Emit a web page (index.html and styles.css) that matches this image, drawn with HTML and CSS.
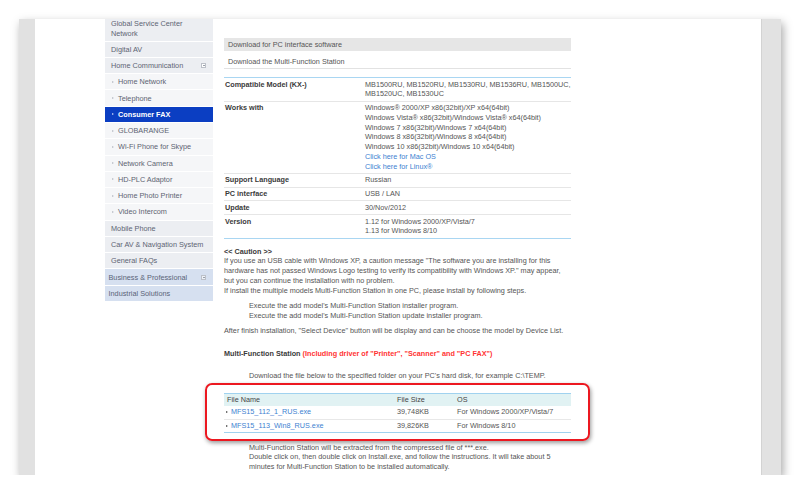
FILE: index.html
```html
<!DOCTYPE html>
<html>
<head>
<meta charset="utf-8">
<link rel="stylesheet" href="styles.css">
</head>
<body>
<div class="stage">
  <div class="frame">
    <div class="strip-l"></div>
    <div class="page">
      <ul class="nav">
        <li class="nav-item first">Global Service Center<br>Network</li>
        <li class="nav-item">Digital AV</li>
        <li class="nav-item">Home Communication <span class="toggle minus"></span></li>
        <li class="nav-item sub">Home Network</li>
        <li class="nav-item sub">Telephone</li>
        <li class="nav-item sub active">Consumer FAX</li>
        <li class="nav-item sub">GLOBARANGE</li>
        <li class="nav-item sub">Wi-Fi Phone for Skype</li>
        <li class="nav-item sub">Network Camera</li>
        <li class="nav-item sub">HD-PLC Adaptor</li>
        <li class="nav-item sub">Home Photo Printer</li>
        <li class="nav-item sub">Video Intercom</li>
        <li class="nav-item">Mobile Phone</li>
        <li class="nav-item">Car AV &amp; Navigation System</li>
        <li class="nav-item">General FAQs</li>
        <li class="nav-item biz">Business &amp; Professional <span class="toggle plus"></span></li>
        <li class="nav-item biz">Industrial Solutions</li>
      </ul>
      <div class="main">
        <div class="bar">Download for PC interface software</div>
        <div class="subtitle">Download the Multi-Function Station</div>
        <table class="spec">
          <tr><th>Compatible Model (KX-)</th><td class="nowrap">MB1500RU, MB1520RU, MB1530RU, MB1536RU, MB1500UC,<br>MB1520UC, MB1530UC</td></tr>
          <tr><th>Works with</th><td>Windows® 2000/XP x86(32bit)/XP x64(64bit)<br>Windows Vista® x86(32bit)/Windows Vista® x64(64bit)<br>Windows 7 x86(32bit)/Windows 7 x64(64bit)<br>Windows 8 x86(32bit)/Windows 8 x64(64bit)<br>Windows 10 x86(32bit)/Windows 10 x64(64bit)<br><a class="link">Click here for Mac OS</a><br><a class="link">Click here for Linux®</a></td></tr>
          <tr><th>Support Language</th><td>Russian</td></tr>
          <tr><th>PC interface</th><td>USB / LAN</td></tr>
          <tr><th>Update</th><td>30/Nov/2012</td></tr>
          <tr class="last"><th>Version</th><td>1.12 for Windows 2000/XP/Vista/7<br>1.13 for Windows 8/10</td></tr>
        </table>
        <div class="caution">
          <p class="bold">&lt;&lt; Caution &gt;&gt;</p>
          <p>If you use an USB cable with Windows XP, a caution message "The software you are installing for this<br>hardware has not passed Windows Logo testing to verify its compatibility with Windows XP." may appear,<br>but you can continue the installation with no problem.<br>If install the multiple models Multi-Function Station in one PC, please install by following steps.</p>
          <p class="indent steps">Execute the add model's Multi-Function Station installer program.<br>Execute the add model's Multi-Function Station update installer program.</p>
          <p class="after">After finish installation, "Select Device" button will be display and can be choose the model by Device List.</p>
          <p class="mfs bold">Multi-Function Station <span class="red">(Including driver of "Printer", "Scanner" and "PC FAX")</span></p>
          <p class="indent dl">Download the file below to the specified folder on your PC's hard disk, for example C:\TEMP.</p>
        </div>
        <div class="files-wrap">
          <table class="files">
            <tr class="head"><td class="c1">File Name</td><td class="c2">File Size</td><td>OS</td></tr>
            <tr><td class="c1"><span class="tri"></span><a class="link">MFS15_112_1_RUS.exe</a></td><td class="c2">39,748KB</td><td>For Windows 2000/XP/Vista/7</td></tr>
            <tr><td class="c1"><span class="tri"></span><a class="link">MFS15_113_Win8_RUS.exe</a></td><td class="c2">39,826KB</td><td>For Windows 8/10</td></tr>
          </table>
        </div>
        <p class="indent tail">Multi-Function Station will be extracted from the compressed file of ***.exe.<br>Double click on, then double click on Install.exe, and follow the instructions. It will take about 5<br>minutes for Multi-Function Station to be installed automatically.</p>
      </div>
    </div>
    <div class="strip-r"></div>
  </div>
</div>
</body>
</html>
```
FILE: styles.css
```css
* { box-sizing: border-box; }
html, body { margin: 0; padding: 0; background: #fff; }
body { font-family: "Liberation Sans", Arial, sans-serif; }
.stage { padding: 19px 19px 0 19px; }
.frame {
  display: flex;
  height: 456px;
  overflow: hidden;
  box-shadow: 2px 4px 9px rgba(0,0,0,0.35);
}
.strip-l { width: 16px; background: #e1e1e1; flex: none; }
.strip-r { width: 20px; background: #e2e2e2; border-left: 1px solid #d3d3d3; flex: none; }
.page {
  flex: 1;
  background: #fff;
  display: flex;
  align-items: flex-start;
  padding-left: 70px;
  gap: 11px;
}

/* sidebar */
.nav {
  list-style: none;
  margin: 0;
  padding: 0;
  width: 108px;
  flex: none;
  font-size: 7.3px;
  color: #5d6472;
}
.nav-item {
  display: flex;
  align-items: center;
  height: 16.27px;
  padding-left: 6px;
  background: #eceef2;
  border-bottom: 1px solid #fff;
  white-space: nowrap;
}
.nav-item.first {
  display: block;
  height: 22.7px;
  line-height: 9.5px;
  padding-top: 0;
}
.nav-item.sub { background: #f5f6f8; padding-left: 7px; }
.nav-item.sub::before {
  content: "";
  width: 0; height: 0;
  border-left: 2px solid #b9bdc5;
  border-top: 1.5px solid transparent;
  border-bottom: 1.5px solid transparent;
  margin-right: 4px;
}
.nav-item.active { background: #0b3ec2; color: #fff; font-weight: bold; }
.nav-item.active::before { border-left-color: #c8d2f0; }
.nav-item.biz { background: #d6e0f0; padding-left: 3.5px; color: #5a6478; }
.toggle {
  margin-left: auto;
  margin-right: 7px;
  width: 5px;
  height: 5px;
  border: 1px solid #bcc0c8;
  background: #fff;
  position: relative;
}
.toggle::after {
  content: "";
  position: absolute;
  left: 0.5px; right: 0.5px; top: 1px;
  height: 1px;
  background: #9aa0aa;
}
.nav-item.biz .toggle { background: #eef2f8; }

/* main */
.main {
  width: 347px;
  flex: none;
  font-size: 7.25px;
  color: #555;
  padding-top: 19px;
}
.bar {
  background: #e6e6e6;
  height: 13px;
  line-height: 13px;
  padding-left: 4px;
}
.subtitle {
  padding: 6px 0 1px 4px;
  line-height: 10px;
  border-bottom: 1px solid #e2e2e2;
  margin-bottom: 8px;
}
.spec {
  width: 100%;
  border-collapse: collapse;
  border-top: 1px solid #a9d6f2;
  border-bottom: 1.5px solid #a9d6f2;
}
.spec th, .spec td {
  text-align: left;
  vertical-align: top;
  padding: 1.5px 0 1.5px 1px;
  line-height: 9.75px;
  border-bottom: 1px solid #e6e6e6;
}
.spec td.nowrap { white-space: nowrap; }
.spec tr.last th, .spec tr.last td { border-bottom: none; }
.spec th { width: 140px; color: #3a3a3a; font-weight: bold; }
.link { color: #3d7fd1; text-decoration: none; }

.caution { margin-top: 8px; }
.caution p, .tail { margin: 0; line-height: 9.9px; }
.caution p { white-space: nowrap; }
.bold { font-weight: bold; color: #3a3a3a; }
.indent { padding-left: 25px; }
.caution .steps { margin-top: 5px; }
.caution .after { margin-top: 5.5px; }
.caution .mfs { margin-top: 13px; }
.red { color: #ff3333; }
.caution .dl { margin-top: 12px; }

.files-wrap { position: relative; margin-top: 12px; }
.files-wrap::after {
  content: "";
  position: absolute;
  left: -19px; right: -19px; top: -10px; bottom: -8px;
  border: 2px solid #ec1820;
  border-radius: 7px;
  box-shadow: 1px 2px 4px rgba(0,0,0,0.4), inset 0 0 0 1px rgba(255,255,255,0.9);
  pointer-events: none;
}
.files {
  width: 100%;
  border-collapse: collapse;
  border-top: 1px solid #a0d2ef;
  border-bottom: 1px solid #a0d2ef;
}
.files td {
  padding: 0;
  height: 13px;
  line-height: 12px;
  border-bottom: 1px solid #e8e8e8;
  vertical-align: middle;
}
.files tr:last-child td { border-bottom: none; height: 12px; }
.files .head td { background: #e1f2f3; color: #444; height: 12.5px; border-bottom: none; }
.files .c1 { width: 173px; padding-left: 3px; }
.files .c2 { width: 60px; }
.tri {
  display: inline-block;
  width: 0; height: 0;
  border-left: 2.5px solid #444;
  border-top: 1.5px solid transparent;
  border-bottom: 1.5px solid transparent;
  margin: 0 3px 0 -1px;
  vertical-align: middle;
}
.tail { margin-top: 10px; white-space: nowrap; }
```
